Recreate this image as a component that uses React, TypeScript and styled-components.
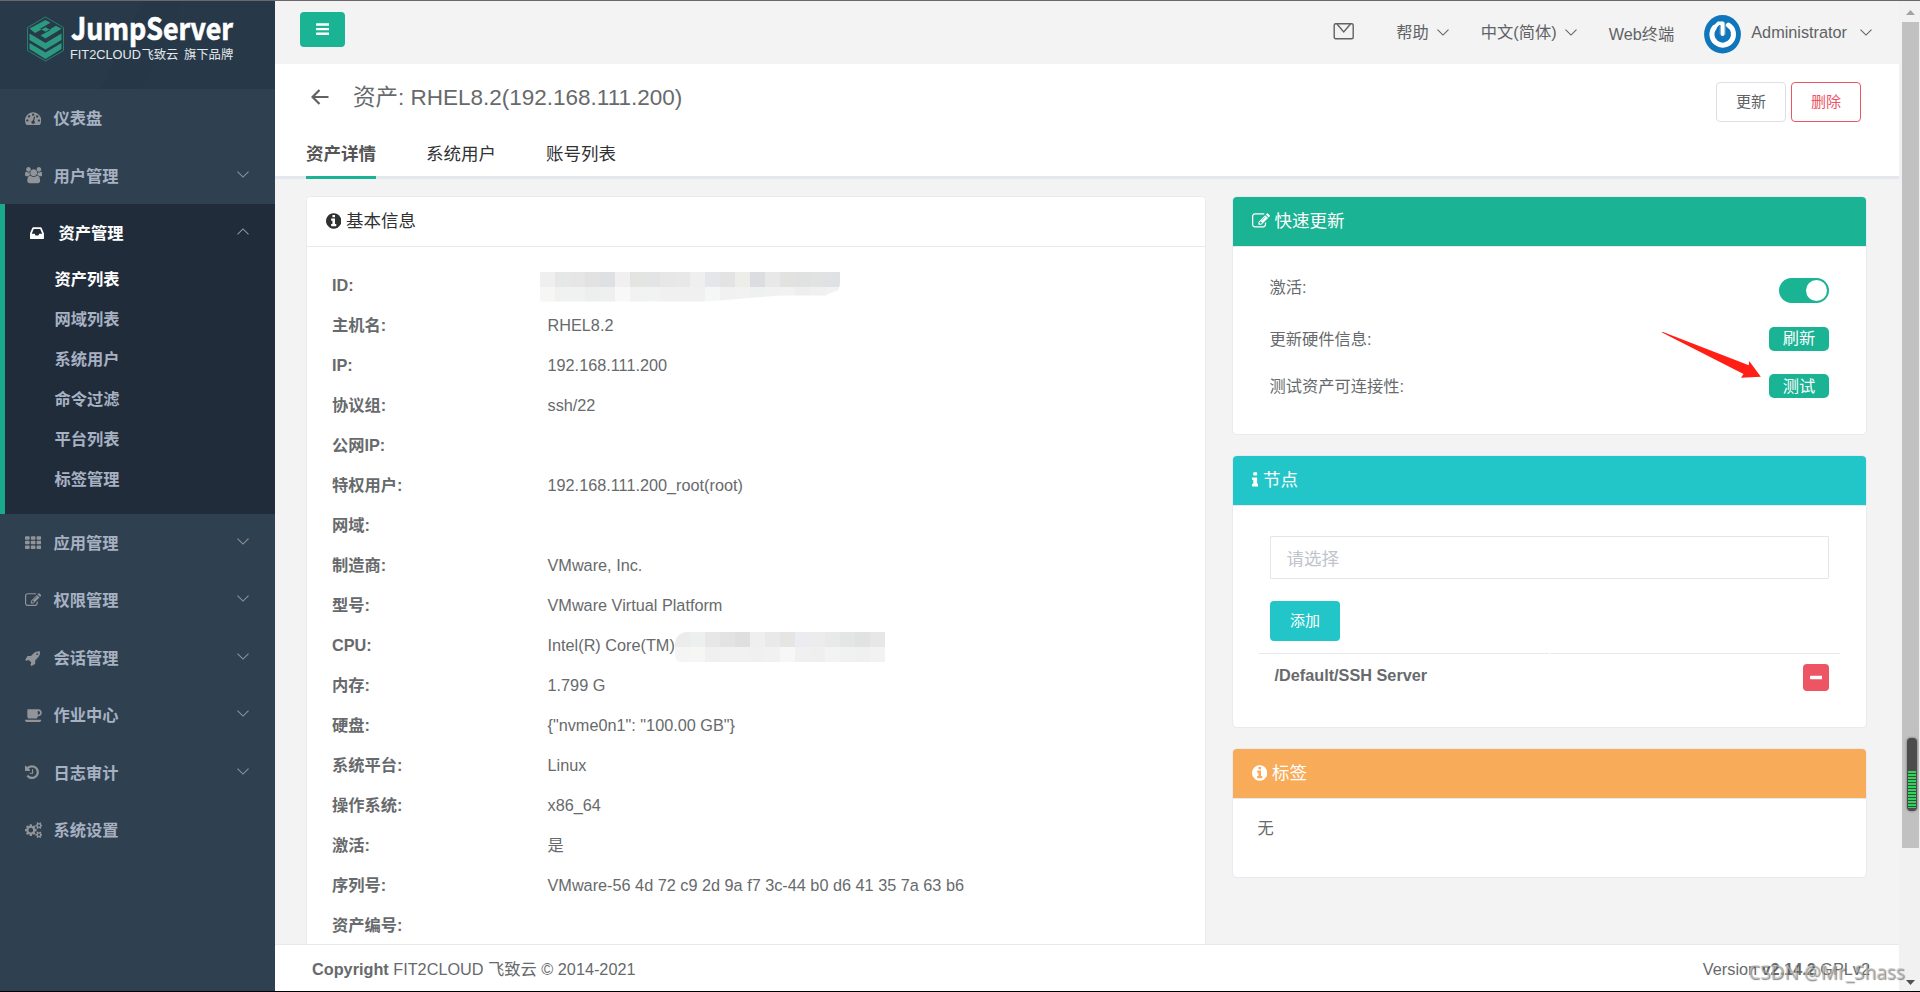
import React from "react";
import styled, { createGlobalStyle, css } from "styled-components";

const GlobalStyle = createGlobalStyle`
  * { box-sizing: border-box; }
  body {
    margin: 0;
    background: #f3f3f4;
    color: #676a6c;
    font-family: "Liberation Sans", "Noto Sans CJK SC", sans-serif;
    font-size: 16.25px;
    overflow: hidden;
  }
`;

/* ---------- icons ---------- */

type Glyph = { w: number; d: string };

const glyphs: Record<string, Glyph> = {
  dashboard: {
    w: 1792,
    d: "M384 1152q0-53-37.5-90.5t-90.5-37.5-90.5 37.5-37.5 90.5 37.5 90.5 90.5 37.5 90.5-37.5 37.5-90.5zm192-448q0-53-37.5-90.5t-90.5-37.5-90.5 37.5-37.5 90.5 37.5 90.5 90.5 37.5 90.5-37.5 37.5-90.5zm428 481l101-382q6-26-7.5-48.5t-38.5-29.5-48 6.5-30 39.5l-101 382q-60 5-107 43.5t-63 98.5q-20 77 20 146t117 89 146-20 89-117q16-60-6-117t-72-91zm660-33q0-53-37.5-90.5t-90.5-37.5-90.5 37.5-37.5 90.5 37.5 90.5 90.5 37.5 90.5-37.5 37.5-90.5zm-640-640q0-53-37.5-90.5t-90.5-37.5-90.5 37.5-37.5 90.5 37.5 90.5 90.5 37.5 90.5-37.5 37.5-90.5zm448 192q0-53-37.5-90.5t-90.5-37.5-90.5 37.5-37.5 90.5 37.5 90.5 90.5 37.5 90.5-37.5 37.5-90.5zm320 448q0 261-141 483-19 29-54 29h-1402q-35 0-54-29-141-221-141-483 0-182 71-348t191-286 286-191 348-71 348 71 286 191 191 286 71 348z",
  },
  users: {
    w: 1920,
    d: "M593 896q-162 5-265 128h-134q-82 0-138-40.5t-56-118.5q0-353 124-353 6 0 43.5 21t97.5 42.5 119 21.5q67 0 133-23-5 37-5 66 0 139 81 256zm1071 637q0 120-73 189.5t-194 69.5h-874q-121 0-194-69.5t-73-189.5q0-53 3.5-103.5t14-109 26.5-108.5 43-97.5 62-81 85.5-53.5 111.5-20q10 0 43 21.5t73 48 107 48 135 21.5 135-21.5 107-48 73-48 43-21.5q61 0 111.5 20t85.5 53.5 62 81 43 97.5 26.5 108.5 14 109 3.5 103.5zm-1024-1277q0 106-75 181t-181 75-181-75-75-181 75-181 181-75 181 75 75 181zm704 384q0 159-112.5 271.5t-271.5 112.5-271.5-112.5-112.5-271.5 112.5-271.5 271.5-112.5 271.5 112.5 112.5 271.5zm576 225q0 78-56 118.5t-138 40.5h-134q-103-123-265-128 81-117 81-256 0-29-5-66 66 23 133 23 59 0 119-21.5t97.5-42.5 43.5-21q124 0 124 353zm-128-609q0 106-75 181t-181 75-181-75-75-181 75-181 181-75 181 75 75 181z",
  },
  inbox: {
    w: 1536,
    d: "M1023 960h316q-1-3-2.5-8t-2.5-8l-212-496h-708l-212 496q-1 2-2.5 8t-2.5 8h316l95 192h320zm513 30v482q0 26-19 45t-45 19h-1408q-26 0-45-19t-19-45v-482q0-62 25-123l238-552q10-25 36.5-42t52.5-17h832q26 0 52.5 17t36.5 42l238 552q25 61 25 123z",
  },
  grid: {
    w: 1792,
    d: "M512 1248v192q0 40-28 68t-68 28h-320q-40 0-68-28t-28-68v-192q0-40 28-68t68-28h320q40 0 68 28t28 68zm0-512v192q0 40-28 68t-68 28h-320q-40 0-68-28t-28-68v-192q0-40 28-68t68-28h320q40 0 68 28t28 68zm640 512v192q0 40-28 68t-68 28h-320q-40 0-68-28t-28-68v-192q0-40 28-68t68-28h320q40 0 68 28t28 68zm-640-1024v192q0 40-28 68t-68 28h-320q-40 0-68-28t-28-68v-192q0-40 28-68t68-28h320q40 0 68 28t28 68zm640 512v192q0 40-28 68t-68 28h-320q-40 0-68-28t-28-68v-192q0-40 28-68t68-28h320q40 0 68 28t28 68zm640 512v192q0 40-28 68t-68 28h-320q-40 0-68-28t-28-68v-192q0-40 28-68t68-28h320q40 0 68 28t28 68zm-640-1024v192q0 40-28 68t-68 28h-320q-40 0-68-28t-28-68v-192q0-40 28-68t68-28h320q40 0 68 28t28 68zm640 512v192q0 40-28 68t-68 28h-320q-40 0-68-28t-28-68v-192q0-40 28-68t68-28h320q40 0 68 28t28 68zm0-512v192q0 40-28 68t-68 28h-320q-40 0-68-28t-28-68v-192q0-40 28-68t68-28h320q40 0 68 28t28 68z",
  },
  edit: {
    w: 1792,
    d: "M888 1184l116-116-152-152-116 116v56h96v96h56zm440-720q-16-16-33 1l-350 350q-17 17-1 33t33-1l350-350q17-17 1-33zm80 594v190q0 119-84.5 203.5t-203.5 84.5h-832q-119 0-203.5-84.5t-84.5-203.5v-832q0-119 84.5-203.5t203.5-84.5h832q63 0 117 25 15 7 18 23 3 17-9 29l-49 49q-14 14-32 8-23-6-45-6h-832q-66 0-113 47t-47 113v832q0 66 47 113t113 47h832q66 0 113-47t47-113v-126q0-13 9-22l64-64q15-15 35-7t20 29zm-96-738l288 288-672 672h-288v-288zm444 132l-92 92-288-288 92-92q28-28 68-28t68 28l152 152q28 28 28 68t-28 68z",
  },
  rocket: {
    w: 1664,
    d: "M1440 448q0-40-28-68t-68-28-68 28-28 68 28 68 68 28 68-28 28-68zm224-288q0 249-75.5 430.5t-253.5 360.5q-81 80-195 176l-20 379q-2 16-16 26l-384 224q-7 4-16 4-12 0-23-9l-64-64q-13-14-8-32l85-276-281-281-276 85q-3 1-9 1-14 0-23-9l-64-64q-17-19-5-39l224-384q10-14 26-16l379-20q96-114 176-195 188-187 358-258t431-71q14 0 24 9.5t10 22.5z",
  },
  coffee: {
    w: 1920,
    d: "M1664 640q0-80-56-136t-136-56h-64v384h64q80 0 136-56t56-136zm-1664 768h1792q0 106-75 181t-181 75h-1280q-106 0-181-75t-75-181zm1856-768q0 159-112.5 271.5t-271.5 112.5h-64v32q0 92-66 158t-158 66h-704q-92 0-158-66t-66-158v-736q0-26 19-45t45-19h1152q159 0 271.5 112.5t112.5 271.5z",
  },
  history: {
    w: 1536,
    d: "M1536 896q0 156-61 298t-164 245-245 164-298 61q-172 0-327-72.5t-264-204.5q-7-10-6.5-22.5t8.5-20.5l137-138q10-9 25-9 16 2 23 12 73 95 179 147t225 52q104 0 198.5-40.5t163.5-109.5 109.5-163.5 40.5-198.5-40.5-198.5-109.5-163.5-163.5-109.5-198.5-40.5q-98 0-188 35.5t-160 101.5l137 138q31 30 14 69-17 40-59 40h-448q-26 0-45-19t-19-45v-448q0-42 40-59 39-17 69 14l130 129q107-101 244.5-156.5t284.5-55.5q156 0 298 61t245 164 164 245 61 298zm-640-288v448q0 14-9 23t-23 9h-320q-14 0-23-9t-9-23v-64q0-14 9-23t23-9h224v-352q0-14 9-23t23-9h64q14 0 23 9t9 23z",
  },
  cogs: {
    w: 1920,
    d: "M896 896q0-106-75-181t-181-75-181 75-75 181 75 181 181 75 181-75 75-181zm768 512q0-52-38-90t-90-38-90 38-38 90q0 53 37.5 90.5t90.5 37.5 90.5-37.5 37.5-90.5zm0-1024q0-52-38-90t-90-38-90 38-38 90q0 53 37.5 90.5t90.5 37.5 90.5-37.5 37.5-90.5zm-384 421v185q0 10-7 19.5t-16 10.5l-155 24q-11 35-32 76 34 48 90 115 7 11 7 20 0 12-7 19-23 30-82.5 89.5t-78.5 59.5q-11 0-21-7l-115-90q-37 19-77 31-11 108-23 155-7 24-30 24h-186q-11 0-20-7.5t-10-17.5l-23-153q-34-10-75-31l-118 89q-7 7-20 7-11 0-21-8-144-133-144-160 0-9 7-19 10-14 41-53t47-61q-23-44-35-82l-152-24q-10-1-17-9.5t-7-19.5v-185q0-10 7-19.5t16-10.5l155-24q11-35 32-76-34-48-90-115-7-11-7-20 0-12 7-20 22-30 82-89t79-59q11 0 21 7l115 90q34-18 77-32 11-108 23-154 7-24 30-24h186q11 0 20 7.5t10 17.5l23 153q34 10 75 31l118-89q8-7 20-7 11 0 21 8 144 133 144 160 0 8-7 19-12 16-42 54t-45 60q23 48 34 82l152 23q10 2 17 10.5t7 19.5zm640 533v140q0 16-149 31-12 27-30 52 51 113 51 138 0 4-4 7-122 71-124 71-8 0-46-47t-52-68q-20 2-30 2t-30-2q-14 21-52 68t-46 47q-2 0-124-71-4-3-4-7 0-25 51-138-18-25-30-52-149-15-149-31v-140q0-16 149-31 13-29 30-52-51-113-51-138 0-4 4-7 4-2 35-20t59-34 30-16q8 0 46 46.5t52 67.5q20-2 30-2t30 2q51-71 92-112l6-2q4 0 124 70 4 3 4 7 0 25-51 138 17 23 30 52 149 15 149 31zm0-1024v140q0 16-149 31-12 27-30 52 51 113 51 138 0 4-4 7-122 71-124 71-8 0-46-47t-52-68q-20 2-30 2t-30-2q-14 21-52 68t-46 47q-2 0-124-71-4-3-4-7 0-25 51-138-18-25-30-52-149-15-149-31v-140q0-16 149-31 13-29 30-52-51-113-51-138 0-4 4-7 4-2 35-20t59-34 30-16q8 0 46 46.5t52 67.5q20-2 30-2t30 2q51-71 92-112l6-2q4 0 124 70 4 3 4 7 0 25-51 138 17 23 30 52 149 15 149 31z",
  },
  infoCircle: {
    w: 1536,
    d: "M1024 1376v-160q0-14-9-23t-23-9h-96v-512q0-14-9-23t-23-9h-320q-14 0-23 9t-9 23v160q0 14 9 23t23 9h96v320h-96q-14 0-23 9t-9 23v160q0 14 9 23t23 9h448q14 0 23-9t9-23zm-128-896v-160q0-14-9-23t-23-9h-192q-14 0-23 9t-9 23v160q0 14 9 23t23 9h192q14 0 23-9t9-23zm640 416q0 209-103 385.5t-279.5 279.5-385.5 103-385.5-103-279.5-279.5-103-385.5 103-385.5 279.5-279.5 385.5-103 385.5 103 279.5 279.5 103 385.5z",
  },
  info: {
    w: 640,
    d: "M640 1344v128q0 26-19 45t-45 19h-512q-26 0-45-19t-19-45v-128q0-26 19-45t45-19h64v-384h-64q-26 0-45-19t-19-45v-128q0-26 19-45t45-19h384q26 0 45 19t19 45v576h64q26 0 45 19t19 45zm-128-1152v192q0 26-19 45t-45 19h-256q-26 0-45-19t-19-45v-192q0-26 19-45t45-19h256q26 0 45 19t19 45z",
  },
  bars: {
    w: 1536,
    d: "M1536 1344v128q0 26-19 45t-45 19h-1408q-26 0-45-19t-19-45v-128q0-26 19-45t45-19h1408q26 0 45 19t19 45zm0-512v128q0 26-19 45t-45 19h-1408q-26 0-45-19t-19-45v-128q0-26 19-45t45-19h1408q26 0 45 19t19 45zm0-512v128q0 26-19 45t-45 19h-1408q-26 0-45-19t-19-45v-128q0-26 19-45t45-19h1408q26 0 45 19t19 45z",
  },
  minus: {
    w: 1408,
    d: "M1408 736v192q0 40-28 68t-68 28h-1216q-40 0-68-28t-28-68v-192q0-40 28-68t68-28h1216q40 0 68 28t28 68z",
  },
};

const Svg = styled.svg`
  display: block;
  flex: none;
`;

const Icon = ({ name, size }: { name: string; size: number }) => {
  const g = glyphs[name];
  return (
    <Svg width={(g.w / 1792) * size} height={size} viewBox={`0 0 ${g.w} 1792`} fill="currentColor">
      <path d={g.d} />
    </Svg>
  );
};

const Caret = ({ up = false, width = 12 }: { up?: boolean; width?: number }) => (
  <Svg width={width} height={width / 2 + 1} viewBox="0 0 12 7" fill="none" stroke="currentColor" strokeWidth="1.1">
    <path d={up ? "M0.5 6.3 L6 0.9 L11.5 6.3" : "M0.5 0.7 L6 6.1 L11.5 0.7"} />
  </Svg>
);

/* ---------- frame ---------- */

const Page = styled.div`
  width: 1920px;
  height: 992px;
  display: flex;
  border-top: 1px solid #6a676b;
  border-bottom: 1px solid #000;
  position: relative;
  overflow: hidden;
`;

const Sidebar = styled.nav`
  width: 275px;
  flex: none;
  background: #2f4050;
`;

const Brand = styled.div`
  height: 88px;
  padding: 15px 0 0 27px;
  background: linear-gradient(115deg, #283a49 0 45%, #263848 45% 58%, #273949 58%);
`;

const MenuItem = styled.div<{ $active?: boolean }>`
  display: flex;
  align-items: center;
  height: 57.4px;
  padding: 1px 26px 0 25px;
  color: ${(p) => (p.$active ? "#fff" : "#a7b1c2")};
  font-weight: 600;
`;

const MenuIcon = styled.span<{ $active?: boolean }>`
  width: 28.5px;
  flex: none;
  color: ${(p) => (p.$active ? "#fff" : "#919498")};
`;

const MenuText = styled.span`
  flex: 1;
  line-height: 24px;
`;

const MenuCaret = styled.span`
  color: #909399;
  padding-bottom: 3px;
`;

const ActiveGroup = styled.div`
  height: 310px;
  background: #212c3b;
  border-left: 5px solid #19aa8d;
`;

const SubItem = styled.div<{ $current?: boolean }>`
  height: 40px;
  line-height: 36px;
  padding-left: 49.5px;
  font-weight: 600;
  color: ${(p) => (p.$current ? "#fff" : "#a7b1c2")};
`;

const Main = styled.div`
  width: 1624px;
  flex: none;
  display: flex;
  flex-direction: column;
  background: #f3f3f3;
`;

/* ---------- top bar ---------- */

const TopBar = styled.header`
  height: 63px;
  flex: none;
  display: flex;
  align-items: flex-start;
  padding: 11px 27px 0 25px;
`;

const ToggleButton = styled.button`
  width: 45px;
  height: 35px;
  border: 0;
  border-radius: 4px;
  background: #1ab394;
  color: #fff;
  display: flex;
  align-items: center;
  justify-content: center;
  margin-right: auto;
`;

const TopLink = styled.div<{ $gap: number; $drop?: number }>`
  display: flex;
  align-items: center;
  gap: ${(p) => p.$gap}px;
  height: 24px;
  line-height: 24px;
  margin-top: ${(p) => p.$drop ?? 8}px;
  color: #606266;
`;

const TopSpacer = styled.div<{ $w: number }>`
  width: ${(p) => p.$w}px;
  flex: none;
`;

const AvatarArt = styled(Svg)`
  margin-top: 3px;
`;

const PageHead = styled.div`
  height: 115px;
  flex: none;
  background: #fff;
  border-bottom: 3px solid #e4e7ed;
`;

const TitleRow = styled.div`
  height: 66px;
  display: flex;
  padding: 18px 38px 0 36px;
`;

const Title = styled.h1`
  margin: 0 auto 0 24px;
  font-size: 22.5px;
  font-weight: 400;
  line-height: 32px;
`;

const BackIcon = styled.span`
  padding-top: 7px;
`;

const OutlineButton = styled.button<{ $danger?: boolean }>`
  width: 70px;
  height: 40px;
  margin-left: 5px;
  border: 1px solid ${(p) => (p.$danger ? "#ed5565" : "#dcdfe6")};
  border-radius: 4px;
  background: #fff;
  color: ${(p) => (p.$danger ? "#ed5565" : "#606266")};
  font: inherit;
  font-size: 15px;
  padding: 0 0 3px;
`;

const Tabs = styled.div`
  display: flex;
  gap: 50px;
  padding-left: 31px;
`;

const Tab = styled.div<{ $current?: boolean }>`
  height: 49px;
  line-height: 48px;
  font-size: 17.5px;
  color: #303133;
  ${(p) =>
    p.$current &&
    css`
      font-weight: 700;
      color: #555;
      border-bottom: 3px solid #1ab394;
    `}
`;

/* ---------- cards ---------- */

const Content = styled.div`
  flex: 1;
  min-height: 0;
  overflow: hidden;
  display: flex;
  align-items: flex-start;
  gap: 26px;
  padding: 17px 0 0 31px;
`;

const RightColumn = styled.div`
  width: 635px;
  display: flex;
  flex-direction: column;
  gap: 20px;
`;

const Card = styled.section<{ $w: number; $h: number }>`
  width: ${(p) => p.$w}px;
  height: ${(p) => p.$h}px;
  background: #fff;
  border: 1px solid #e7eaf0;
  border-radius: 5px;
  overflow: hidden;
`;

const CardHead = styled.div<{ $bg?: string }>`
  height: 50px;
  display: flex;
  align-items: center;
  gap: 4.5px;
  padding: 0 0 2px 19px;
  border-bottom: 1px solid #e7eaec;
  font-size: 17.5px;
  line-height: 26px;
  color: ${(p) => (p.$bg ? "#fff" : "#303133")};
  background: ${(p) => p.$bg ?? "#fff"};
`;

const DetailList = styled.dl`
  margin: 0;
  padding: 18px 0 0 25px;
`;

const DetailRow = styled.div`
  display: flex;
  align-items: center;
  height: 40px;
  line-height: 24px;
`;

const Term = styled.dt`
  width: 215.5px;
  font-weight: 700;
`;

const Value = styled.dd`
  margin: 0;
  display: flex;
  align-items: center;
`;

const Mosaic = styled.span<{ $cols: number; $shift: number; $radius: string; $clip?: string }>`
  display: grid;
  grid-template-columns: repeat(${(p) => p.$cols}, 15px);
  grid-auto-rows: 15px;
  margin: 3px 0 0 ${(p) => p.$shift}px;
  border-radius: ${(p) => p.$radius};
  clip-path: ${(p) => p.$clip ?? "none"};
  overflow: hidden;
`;

const Cell = styled.i<{ $c: string }>`
  background: ${(p) => p.$c};
`;

const ActionRow = styled.div<{ $h: number }>`
  display: flex;
  align-items: center;
  justify-content: space-between;
  height: ${(p) => p.$h}px;
  padding: 0 37px 0 36.5px;
`;

const ActionLabel = styled.span`
  padding-bottom: 2px;
`;

const Switch = styled.span`
  width: 50px;
  height: 25px;
  border-radius: 13px;
  background: #1ab394;
  display: flex;
  justify-content: flex-end;
  padding: 2px;
  margin-top: 6px;
`;

const Knob = styled.span`
  width: 21px;
  height: 21px;
  border-radius: 50%;
  background: #fff;
`;

const MiniButton = styled.button`
  width: 60px;
  height: 24px;
  border: 0;
  border-radius: 5px;
  background: #1ab394;
  color: #fff;
  font: inherit;
  line-height: 23px;
  padding: 0;
`;

const NodeBody = styled.div`
  padding: 30px 26px 0;
`;

const SelectBox = styled.div`
  height: 43px;
  margin: 0 11px 0 10.5px;
  padding-left: 16px;
  border: 1px solid #e5e6e7;
  border-radius: 1px;
  font-size: 17.5px;
  line-height: 45px;
  color: #c0c4cc;
`;

const AddButton = styled.button`
  width: 70px;
  height: 40px;
  margin: 22px 11px 12px;
  border: 0;
  border-radius: 4px;
  background: #23c6c8;
  color: #fff;
  font: inherit;
  font-size: 15px;
  padding: 0 0 3px;
  display: block;
`;

const RuleRow = styled.div`
  display: flex;
  gap: 1px;
`;

const Rule = styled.span`
  flex: 1;
  height: 1px;
  background: #e7eaec;
`;

const NodeRow = styled.div`
  display: flex;
  justify-content: space-between;
  align-items: flex-start;
  padding: 10px 11px 0 15.5px;
  font-weight: 700;
  line-height: 23px;
`;

const RemoveButton = styled.button`
  width: 26px;
  height: 27px;
  border: 0;
  border-radius: 4px;
  background: #ed5565;
  color: #fff;
  padding: 1px 0 0;
  display: flex;
  align-items: center;
  justify-content: center;
`;

const EmptyText = styled.div`
  padding: 17px 24.5px;
  line-height: 24px;
`;

const Footer = styled.footer`
  height: 47px;
  flex: none;
  display: flex;
  justify-content: space-between;
  padding: 0 29px 0 37px;
  border-top: 1px solid #e7eaec;
  background: #fff;
  line-height: 49px;
`;

/* ---------- scroll bar and overlays ---------- */

const ScrollTrack = styled.div`
  width: 21px;
  flex: none;
  background: #f1f1f1;
  display: flex;
  flex-direction: column;
  align-items: center;
  padding: 9px 0 6px 1px;
`;

const ScrollThumb = styled.div`
  width: 17px;
  height: 826px;
  margin: 7px 0 auto;
  background: #c1c1c1;
`;

const Meter = styled.div`
  position: absolute;
  left: 1907px;
  top: 737px;
  width: 10px;
  height: 73px;
  border-radius: 4px;
  background: #4c4c4c;
  box-shadow: 0 0 2px 1px rgba(110, 110, 110, 0.5);
  padding: 33px 1px 2px;
`;

const MeterBars = styled.div`
  height: 37px;
  background: repeating-linear-gradient(#2fd45c 0 2px, #3c4a3f 2px 3px);
`;

const Pointer = styled.svg`
  position: absolute;
  left: 1658px;
  top: 327px;
`;

const Watermark = styled.div`
  position: absolute;
  left: 1748px;
  top: 957px;
  font-family: "Noto Sans", sans-serif;
  font-size: 19px;
  line-height: 28px;
  letter-spacing: -0.05px;
  white-space: nowrap;
  color: rgba(195, 195, 195, 0.65);
  text-shadow: 1px 1px 1px rgba(70, 70, 70, 0.65);
`;

/* ---------- data ---------- */

const menuTop = [
  { icon: "dashboard", text: "仪表盘", caret: false },
  { icon: "users", text: "用户管理", caret: true },
];
const subMenu = ["资产列表", "网域列表", "系统用户", "命令过滤", "平台列表", "标签管理"];
const menuBottom = [
  { icon: "grid", text: "应用管理", caret: true },
  { icon: "edit", text: "权限管理", caret: true },
  { icon: "rocket", text: "会话管理", caret: true },
  { icon: "coffee", text: "作业中心", caret: true },
  { icon: "history", text: "日志审计", caret: true },
  { icon: "cogs", text: "系统设置", caret: false },
];

const idCells =
  "#efefef #e6e8e7 #e6e6e6 #e2e2e3 #dfe0e3 #f0f0f0 #e4e4e2 #e3e5e4 #e6e7e6 #e8e8e8 #efefef #e5e6ea #e3e3e4 #ededea #dcdde0 #e8e8e8 #e2e2e0 #e0e1e0 #e1e3e2 #dfe1e4 " +
  "#f6f6f4 #f0f2f1 #f0f1f1 #edefee #efefef #f8f8f8 #f2f2f2 #f1f3f2 #f0f0f0 #f0f0f0 #f0f0f0 #f5f7f6 #f1f1f1 #f2f2f2 #eff1f0 #f1f1f1 #f2f2f2 #edefee #f0f0f0 #f2f2f3";
const cpuCells =
  "#ececec #eef0ef #e7e7e7 #e3e3e3 #dfdfdf #efefef #e8e9eb #e7e5e4 #ebecef #ececec #e8eae9 #e4e6e5 #e1e2e4 #e7e7e7 " +
  "#f5f5f5 #f6f6f4 #f0f0f0 #f1f1f1 #f1f1f1 #f0f0f0 #f1f1f1 #f7f7f7 #f0f0f0 #efefef #f3f3f3 #f0f2f1 #f0f0f0 #f2f2f2";

const details: [string, React.ReactNode][] = [
  [
    "ID:",
    <Mosaic
      key="id"
      $cols={20}
      $shift={-7.5}
      $radius="0 0 20px 0"
      $clip="polygon(0 0, 100% 0, 100% 60%, 95% 80%, 80% 80%, 56% 100%, 0 100%)"
    >
      {idCells.split(" ").map((c, i) => <Cell key={i} $c={c} />)}
    </Mosaic>,
  ],
  ["主机名:", "RHEL8.2"],
  ["IP:", "192.168.111.200"],
  ["协议组:", "ssh/22"],
  ["公网IP:", ""],
  ["特权用户:", "192.168.111.200_root(root)"],
  ["网域:", ""],
  ["制造商:", "VMware, Inc."],
  ["型号:", "VMware Virtual Platform"],
  [
    "CPU:",
    <React.Fragment key="cpu">
      Intel(R) Core(TM)
      <Mosaic $cols={14} $shift={0} $radius="12px 0 0 6px">
        {cpuCells.split(" ").map((c, i) => <Cell key={i} $c={c} />)}
      </Mosaic>
    </React.Fragment>,
  ],
  ["内存:", "1.799 G"],
  ["硬盘:", '{"nvme0n1": "100.00 GB"}'],
  ["系统平台:", "Linux"],
  ["操作系统:", "x86_64"],
  ["激活:", "是"],
  ["序列号:", "VMware-56 4d 72 c9 2d 9a f7 3c-44 b0 d6 41 35 7a 63 b6"],
  ["资产编号:", ""],
];

const LogoArt = styled(Svg)`
  overflow: visible;
`;

const Logo = () => (
  <LogoArt width="210" height="50" viewBox="0 0 210 50">
    <path d="M18.5 1 L36.5 11.5 V34.5 L18.5 45 L0.5 34.5 V11.5 Z" fill="none" stroke="#27806f" strokeWidth="1" />
    <g fill="#2c9a80">
      <path d="M2.5 12.6 L18.5 4 L23.5 6.8 L13 12.7 L18.5 15.7 L29 9.8 L34.5 12.8 L18.5 22.5 L13.5 19.6 L23.5 13.9 L18.5 11.2 L8 17 Z" />
      <path d="M2.5 17.5 L18.5 27 L34.5 17.5 V24 L18.5 33.5 L2.5 24 Z" />
      <path d="M2.5 27 L18.5 36.5 L34.5 27 V33 L18.5 43 L2.5 33 Z" />
    </g>
    <text
      x="44" y="24.3" fill="#fff" stroke="#fff" strokeWidth="0.7" fontSize="31" fontWeight="700"
      fontFamily='"Noto Sans CJK SC", sans-serif' textLength="162" lengthAdjust="spacingAndGlyphs"
    >
      JumpServer
    </text>
    <text x="43" y="43" fill="#e6e9ec" fontSize="12.8" textLength="71" lengthAdjust="spacingAndGlyphs">FIT2CLOUD</text>
    <text x="114.5" y="43" fill="#e6e9ec" fontSize="12.3">飞致云</text>
    <text x="157" y="43" fill="#e6e9ec" fontSize="12.3">旗下品牌</text>
  </LogoArt>
);

const Menu = ({ icon, text, caret }: { icon: string; text: string; caret: boolean }) => (
  <MenuItem>
    <MenuIcon><Icon name={icon} size={16.25} /></MenuIcon>
    <MenuText>{text}</MenuText>
    {caret && <MenuCaret><Caret /></MenuCaret>}
  </MenuItem>
);

export default function App() {
  return (
    <>
      <GlobalStyle />
      <Page>
        <Sidebar>
          <Brand><Logo /></Brand>
          {menuTop.map((m) => <Menu key={m.text} {...m} />)}
          <ActiveGroup>
            <MenuItem $active>
              <MenuIcon $active><Icon name="inbox" size={16.25} /></MenuIcon>
              <MenuText>资产管理</MenuText>
              <MenuCaret><Caret up /></MenuCaret>
            </MenuItem>
            {subMenu.map((s, i) => <SubItem key={s} $current={i === 0}>{s}</SubItem>)}
          </ActiveGroup>
          {menuBottom.map((m) => <Menu key={m.text} {...m} />)}
        </Sidebar>

        <Main>
          <TopBar>
            <ToggleButton><Icon name="bars" size={16.25} /></ToggleButton>
            <TopLink $gap={0} $drop={7}>
              <Svg width="22" height="18" viewBox="0 0 22 18" fill="none" stroke="#606266" strokeWidth="1.4">
                <rect x="1.2" y="1.7" width="19" height="15" rx="1.5" />
                <path d="M4 2 L10.7 10 L17.5 2" />
              </Svg>
            </TopLink>
            <TopSpacer $w={41} />
            <TopLink $gap={8}>帮助 <Caret /></TopLink>
            <TopSpacer $w={32} />
            <TopLink $gap={8}>中文(简体) <Caret /></TopLink>
            <TopSpacer $w={32} />
            <TopLink $gap={0} $drop={10}>Web终端</TopLink>
            <TopSpacer $w={30} />
            <AvatarArt width="37" height="39" viewBox="0 0 37 39">
              <ellipse cx="18.5" cy="19.3" rx="18.4" ry="19.2" fill="#0f76bb" />
              <g fill="none" stroke="#fff" strokeLinecap="round">
                <path d="M10.5 12.3 A10.8 10.8 0 1 0 24.5 10.2" strokeWidth="5" />
                <path d="M18.6 8.5 V19" strokeWidth="4.2" />
                <path d="M10.5 12.3 L14.5 8.2 H18" strokeWidth="3.6" />
              </g>
              <path d="M21.3 8.5 V19.5 M16 11 V19.5" stroke="#8aa3b5" strokeWidth="0.7" />
            </AvatarArt>
            <TopSpacer $w={10} />
            <TopLink $gap={13}>Administrator <Caret /></TopLink>
          </TopBar>

          <PageHead>
            <TitleRow>
              <BackIcon>
                <Svg width="18" height="16" viewBox="0 0 18 16" fill="none" stroke="#606266" strokeWidth="2.2">
                  <path d="M17.5 8 H1.5 M8.5 1 L1.5 8 L8.5 15" />
                </Svg>
              </BackIcon>
              <Title>资产: RHEL8.2(192.168.111.200)</Title>
              <OutlineButton>更新</OutlineButton>
              <OutlineButton $danger>删除</OutlineButton>
            </TitleRow>
            <Tabs>
              <Tab $current>资产详情</Tab>
              <Tab>系统用户</Tab>
              <Tab>账号列表</Tab>
            </Tabs>
          </PageHead>

          <Content>
            <Card $w={900} $h={900}>
              <CardHead><Icon name="infoCircle" size={18} />基本信息</CardHead>
              <DetailList>
                {details.map(([k, v]) => (
                  <DetailRow key={k}>
                    <Term>{k}</Term>
                    <Value>{v}</Value>
                  </DetailRow>
                ))}
              </DetailList>
            </Card>

            <RightColumn>
              <Card $w={635} $h={239}>
                <CardHead $bg="#1ab394"><Icon name="edit" size={18} />快速更新</CardHead>
                <ActionRow $h={80}><ActionLabel>激活:</ActionLabel><Switch><Knob /></Switch></ActionRow>
                <ActionRow $h={23}><ActionLabel>更新硬件信息:</ActionLabel><MiniButton>刷新</MiniButton></ActionRow>
                <ActionRow $h={72}><ActionLabel>测试资产可连接性:</ActionLabel><MiniButton>测试</MiniButton></ActionRow>
              </Card>

              <Card $w={635} $h={273}>
                <CardHead $bg="#23c6c8"><Icon name="info" size={18} />节点</CardHead>
                <NodeBody>
                  <SelectBox>请选择</SelectBox>
                  <AddButton>添加</AddButton>
                  <RuleRow><Rule /><Rule /></RuleRow>
                  <NodeRow>
                    /Default/SSH Server
                    <RemoveButton><Icon name="minus" size={16.25} /></RemoveButton>
                  </NodeRow>
                </NodeBody>
              </Card>

              <Card $w={635} $h={130}>
                <CardHead $bg="#f8ac59"><Icon name="infoCircle" size={18} />标签</CardHead>
                <EmptyText>无</EmptyText>
              </Card>
            </RightColumn>
          </Content>

          <Footer>
            <span><b>Copyright</b> FIT2CLOUD 飞致云 © 2014-2021</span>
            <span>Version <b>v2.14.2</b> GPLv2</span>
          </Footer>
        </Main>

        <ScrollTrack>
          <Svg width="9" height="5" viewBox="0 0 9 5" fill="#a3a3a3"><path d="M0 5 L4.5 0 L9 5 Z" /></Svg>
          <ScrollThumb />
          <Svg width="9" height="5" viewBox="0 0 9 5" fill="#505050"><path d="M0 0 L4.5 5 L9 0 Z" /></Svg>
        </ScrollTrack>

        <Meter><MeterBars /></Meter>
        <Pointer width="106" height="54" viewBox="1658 328 106 54">
          <path d="M1661.5 332.3 L1663 332 L1748.8 365.2 L1749.2 361 L1760.8 376.7 L1741 377.8 L1743.5 374 Z" fill="#ff1f14" />
        </Pointer>
        <Watermark>CSDN @Mr_Shass</Watermark>
      </Page>
    </>
  );
}
